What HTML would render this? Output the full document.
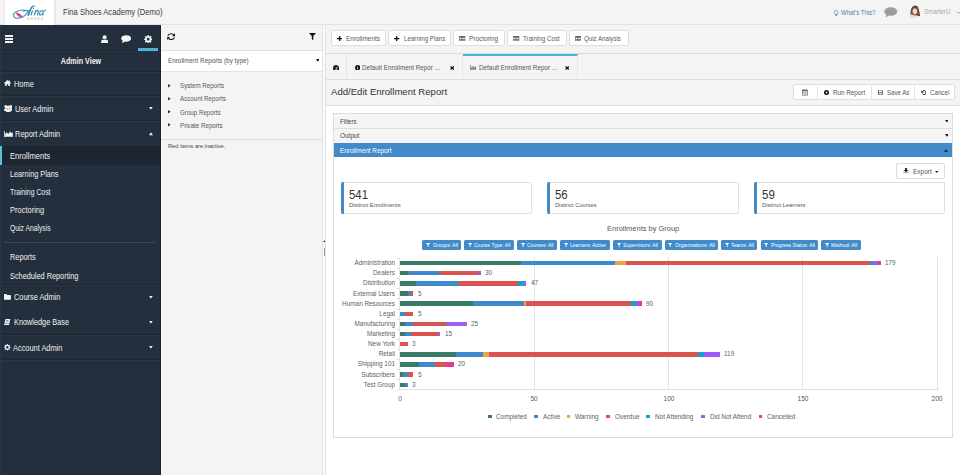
<!DOCTYPE html>
<html><head><meta charset="utf-8">
<style>
*{box-sizing:border-box;margin:0;padding:0}
html,body{width:960px;height:475px;overflow:hidden;background:#f4f4f4;font-family:"Liberation Sans",sans-serif;color:#333}
body{position:relative}
.a{position:absolute;white-space:nowrap}
</style></head><body>
<div class="a" style="left:0px;top:0px;width:960px;height:25px;background:#f4f4f4;"></div>
<div class="a" style="left:0px;top:24px;width:960px;height:1px;background:#e2e2e2;"></div>
<div class="a" style="left:3.5px;top:0px;width:1px;height:25px;background:#e6e6e6;"></div>
<div class="a" style="left:54px;top:0px;width:1.5px;height:25px;background:#e6e6e6;"></div>
<div class="a" style="left:4.5px;top:0px;width:49.5px;height:24.5px;background:#fff;"></div>
<svg class="a" style="left:10px;top:2.5px;" width="40" height="20" viewBox="0 0 950 475"><path d="M460 185 C360 165 210 150 115 230 C45 295 95 375 205 362 C305 350 385 280 432 200" fill="none" stroke="#5aa6cf" stroke-width="30"/><path d="M135 220 C150 290 200 340 285 348 C300 318 275 290 245 268 C210 245 170 225 135 220z" fill="#e3467c"/><path d="M545 75 C495 100 470 210 425 300" fill="none" stroke="#2f7ea6" stroke-width="38"/><path d="M545 75 C575 55 600 75 570 95" fill="none" stroke="#2f7ea6" stroke-width="22"/><path d="M300 190 L470 180" stroke="#3d8ab3" stroke-width="22"/><path d="M535 175 L500 295 M610 175 L575 295 M600 215 C640 160 690 165 665 230 L650 295" fill="none" stroke="#3a8bb5" stroke-width="30"/><circle cx="560" cy="128" r="18" fill="#3a8bb5"/><path d="M790 200 C760 160 700 200 700 260 C700 310 760 290 790 215 L775 295 M790 200 L850 160" fill="none" stroke="#4a98c2" stroke-width="28"/><text x="405" y="405" font-family="Liberation Sans" font-size="78" letter-spacing="26" fill="#a9a9a9">SHOES</text></svg>
<div class="a" style="left:62.5px;top:6px;font-size:8.6px;line-height:12px;color:#3a3a3a;font-weight:400;transform:scaleX(0.8876);transform-origin:left center;">Fina Shoes Academy (Demo)</div>
<svg class="a" style="left:834px;top:9.5px;" width="4.5" height="6" viewBox="0 0 9 12"><path d="M4.5 0.8a3.7 3.7 0 0 1 2.3 6.6v1.6H2.2V7.4A3.7 3.7 0 0 1 4.5 0.8z" fill="none" stroke="#5b86b8" stroke-width="1.4"/><rect x="2.6" y="9.8" width="3.8" height="1.6" fill="#5b86b8"/></svg>
<div class="a" style="left:841px;top:7px;font-size:7.2px;line-height:12px;color:#4f7db4;font-weight:400;transform:scaleX(0.8362);transform-origin:left center;">What's This?</div>
<svg class="a" style="left:884px;top:7px;" width="13.5" height="11" viewBox="0 0 27 22"><ellipse cx="13.5" cy="9" rx="13" ry="8.5" fill="#9d9d9d"/><path d="M5 14 L3 21 L11 16z" fill="#9d9d9d"/></svg>
<svg class="a" style="left:907.5px;top:5px;" width="12.5" height="13" viewBox="0 0 25 26"><path d="M6 24 Q4 14 6.5 7 Q9.5 0.5 14.5 1 Q20 1.5 21.5 8 Q23 15 24.5 22 Q21 23 18 21 L8 21z" fill="#73463a"/><ellipse cx="13.8" cy="12.5" rx="4.6" ry="6.2" fill="#f1d3c2"/><path d="M9 8 Q13 4.5 19 7.5 Q17.5 4 13.5 4 Q10 4.5 9 8z" fill="#73463a"/><path d="M4 26 Q5 19 8 18 Q10 22 13 21 Q17 24 21 26z" fill="#f0dcd2"/></svg>
<div class="a" style="left:924px;top:6px;font-size:7.2px;line-height:12px;color:#a9a9a9;font-weight:400;transform:scaleX(0.8569);transform-origin:left center;">SmarterU</div>
<svg class="a" style="left:955.5px;top:10.5px;" width="5" height="3" viewBox="0 0 10 6"><path d="M1 1l4 4 4-4" fill="none" stroke="#888" stroke-width="1.5"/></svg>
<div class="a" style="left:0px;top:25px;width:160px;height:450px;background:#242f3e;"></div>
<div class="a" style="left:160px;top:25px;width:1px;height:450px;background:#1b222c;"></div>
<div class="a" style="left:0px;top:25px;width:1px;height:450px;background:#2a3442;"></div>
<div class="a" style="left:5px;top:35px;width:8px;height:1.6px;background:#f2f2f2;"></div>
<div class="a" style="left:5px;top:38px;width:8px;height:1.6px;background:#f2f2f2;"></div>
<div class="a" style="left:5px;top:41px;width:8px;height:1.6px;background:#f2f2f2;"></div>
<svg class="a" style="left:101px;top:34.6px;" width="7.2" height="8.4" viewBox="0 0 14 16"><ellipse cx="7" cy="4.4" rx="3.9" ry="4.2" fill="#f4f4f4"/><path d="M0 14 Q0 9.6 3.4 8.4 Q7 10.6 10.6 8.4 Q14 9.6 14 14 Q14 16 12 16 H2 Q0 16 0 14z" fill="#f4f4f4"/></svg>
<svg class="a" style="left:120.8px;top:35px;" width="10.4" height="8.3" viewBox="0 0 20 16"><ellipse cx="10" cy="6.6" rx="9.6" ry="6.3" fill="#f4f4f4"/><path d="M3.5 10.5 L1.6 15.6 L8.5 12.4z" fill="#f4f4f4"/></svg>
<svg class="a" style="left:143.9px;top:34.7px;" width="8.5" height="8.5" viewBox="0 0 16 16"><path fill="#f4f4f4" fill-rule="evenodd" d="M13.59 5.81 L13.89 6.87 L15.89 6.69 L15.89 9.31 L13.89 9.13 L13.59 10.19 L13.50 10.40 L12.97 11.37 L14.51 12.65 L12.65 14.51 L11.37 12.97 L10.40 13.50 L10.19 13.59 L9.13 13.89 L9.31 15.89 L6.69 15.89 L6.87 13.89 L5.81 13.59 L5.60 13.50 L4.63 12.97 L3.35 14.51 L1.49 12.65 L3.03 11.37 L2.50 10.40 L2.41 10.19 L2.11 9.13 L0.11 9.31 L0.11 6.69 L2.11 6.87 L2.41 5.81 L2.50 5.60 L3.03 4.63 L1.49 3.35 L3.35 1.49 L4.63 3.03 L5.60 2.50 L5.81 2.41 L6.87 2.11 L6.69 0.11 L9.31 0.11 L9.13 2.11 L10.19 2.41 L10.40 2.50 L11.37 3.03 L12.65 1.49 L14.51 3.35 L12.97 4.63 L13.50 5.60z M10.6 8 a2.6 2.6 0 1 0 -5.2 0 a2.6 2.6 0 1 0 5.2 0z"/></svg>
<div class="a" style="left:1px;top:49.6px;width:159px;height:1px;background:#1e2733;"></div>
<div class="a" style="left:1px;top:50.6px;width:159px;height:1px;background:#2b3645;"></div>
<div class="a" style="left:138.3px;top:48.4px;width:19.7px;height:2.4px;background:#4cb2d8;"></div>
<div class="a" style="left:-69.2px;width:300px;text-align:center;top:55px;font-size:8.6px;line-height:12px;color:#f2f2f2;font-weight:700;transform:scaleX(0.8314);transform-origin:center center;">Admin View</div>
<div class="a" style="left:1px;top:70.5px;width:159px;height:1px;background:#1e2733;"></div>
<div class="a" style="left:1px;top:71.5px;width:159px;height:1px;background:#2b3645;"></div>
<svg class="a" style="left:3.7px;top:80.4px;" width="7" height="6" viewBox="0 0 13 11"><path d="M6.5 0 L13 5.6 L11.9 6.8 L11 6 V11 H7.9 V7.9 H5.1 V11 H2 V6 L1.1 6.8 L0 5.6z M9.4 0.8 H11.2 V3.6 L9.4 2.1z" fill="#f4f4f4"/></svg>
<div class="a" style="left:13.6px;top:78px;font-size:8.6px;line-height:12px;color:#f2f2f2;font-weight:400;transform:scaleX(0.8630);transform-origin:left center;">Home</div>
<div class="a" style="left:1px;top:95px;width:159px;height:1px;background:#1e2733;"></div>
<div class="a" style="left:1px;top:96px;width:159px;height:1px;background:#2b3645;"></div>
<svg class="a" style="left:3.5px;top:104.9px;" width="8.6" height="7.2" viewBox="0 0 16 13.4"><circle cx="3.4" cy="3" r="2.8" fill="#f4f4f4"/><circle cx="12.6" cy="3" r="2.8" fill="#f4f4f4"/><circle cx="8" cy="4.4" r="3.3" fill="#f4f4f4"/><path d="M0 10.4 Q0 5.6 3.4 5.6 Q5.2 5.6 6 6.8 Q4.4 8.4 4.4 11 H0z M16 10.4 Q16 5.6 12.6 5.6 Q10.8 5.6 10 6.8 Q11.6 8.4 11.6 11 H16z M3.6 13.4 Q3.6 7.6 8 7.6 Q12.4 7.6 12.4 13.4z" fill="#f4f4f4"/></svg>
<div class="a" style="left:14.6px;top:103px;font-size:8.6px;line-height:12px;color:#f2f2f2;font-weight:400;transform:scaleX(0.8639);transform-origin:left center;">User Admin</div>
<svg class="a" style="left:149.4px;top:107px;" width="3.8" height="2.7" viewBox="0 0 8 6"><path d="M0 0h8L4 6z" fill="#f2f2f2"/></svg>
<div class="a" style="left:1px;top:120px;width:159px;height:1px;background:#1e2733;"></div>
<div class="a" style="left:1px;top:121px;width:159px;height:1px;background:#2b3645;"></div>
<svg class="a" style="left:3.6px;top:130.7px;" width="9.2" height="6.1" viewBox="0 0 17 11"><path d="M0 0 H1.5 V9.5 H17 V11 H0z M2.2 9 V5.5 L5 2.2 L8 5.2 L11.2 1 L14 4 L16.2 1.8 V9z" fill="#f4f4f4"/></svg>
<div class="a" style="left:15.3px;top:128px;font-size:8.6px;line-height:12px;color:#f2f2f2;font-weight:400;transform:scaleX(0.8694);transform-origin:left center;">Report Admin</div>
<svg class="a" style="left:149.3px;top:132.4px;" width="4" height="3.3" viewBox="0 0 8 6"><path d="M0 6h8L4 0z" fill="#f2f2f2"/></svg>
<div class="a" style="left:1px;top:146px;width:159px;height:18.8px;background:#1d2530;"></div>
<div class="a" style="left:0px;top:146px;width:2px;height:18.8px;background:#5bc0de;"></div>
<div class="a" style="left:9.6px;top:150px;font-size:8.6px;line-height:12px;color:#f0f0f0;font-weight:400;transform:scaleX(0.8830);transform-origin:left center;">Enrollments</div>
<div class="a" style="left:9.6px;top:168px;font-size:8.6px;line-height:12px;color:#f0f0f0;font-weight:400;transform:scaleX(0.8453);transform-origin:left center;">Learning Plans</div>
<div class="a" style="left:9.6px;top:186px;font-size:8.6px;line-height:12px;color:#f0f0f0;font-weight:400;transform:scaleX(0.7968);transform-origin:left center;">Training Cost</div>
<div class="a" style="left:9.6px;top:204px;font-size:8.6px;line-height:12px;color:#f0f0f0;font-weight:400;transform:scaleX(0.8725);transform-origin:left center;">Proctoring</div>
<div class="a" style="left:9.6px;top:222px;font-size:8.6px;line-height:12px;color:#f0f0f0;font-weight:400;transform:scaleX(0.7864);transform-origin:left center;">Quiz Analysis</div>
<div class="a" style="left:4px;top:241.6px;width:151px;height:1px;background:#34485e;"></div>
<div class="a" style="left:9.7px;top:251px;font-size:8.6px;line-height:12px;color:#f0f0f0;font-weight:400;transform:scaleX(0.8568);transform-origin:left center;">Reports</div>
<div class="a" style="left:9.7px;top:270px;font-size:8.6px;line-height:12px;color:#f0f0f0;font-weight:400;transform:scaleX(0.8528);transform-origin:left center;">Scheduled Reporting</div>
<div class="a" style="left:1px;top:284px;width:159px;height:1px;background:#1e2733;"></div>
<div class="a" style="left:1px;top:285px;width:159px;height:1px;background:#2b3645;"></div>
<svg class="a" style="left:4.2px;top:294px;" width="6.9" height="5.7" viewBox="0 0 14 11.5"><path d="M0 1 Q0 0 1 0 H5 L6.5 1.8 H13 Q14 1.8 14 2.8 V10.5 Q14 11.5 13 11.5 H1 Q0 11.5 0 10.5z" fill="#f2f2f2"/></svg>
<div class="a" style="left:13.9px;top:291px;font-size:8.6px;line-height:12px;color:#f2f2f2;font-weight:400;transform:scaleX(0.8590);transform-origin:left center;">Course Admin</div>
<svg class="a" style="left:149.4px;top:296px;" width="3.8" height="2.7" viewBox="0 0 8 6"><path d="M0 0h8L4 6z" fill="#f2f2f2"/></svg>
<div class="a" style="left:1px;top:309.4px;width:159px;height:1px;background:#1e2733;"></div>
<div class="a" style="left:1px;top:310.4px;width:159px;height:1px;background:#2b3645;"></div>
<svg class="a" style="left:4.2px;top:319px;" width="6.8" height="6.2" viewBox="0 0 14 12.5"><path d="M3 0 H13 L11 9 H1z" fill="#f2f2f2"/><path d="M0.5 9.5 H11 L10.3 12.5 H0z" fill="#f2f2f2"/><path d="M4.5 3h5M4 5.5h5" stroke="#242f3e" stroke-width="0.9"/></svg>
<div class="a" style="left:13.9px;top:316px;font-size:8.6px;line-height:12px;color:#f2f2f2;font-weight:400;transform:scaleX(0.8521);transform-origin:left center;">Knowledge Base</div>
<svg class="a" style="left:149.4px;top:321px;" width="3.8" height="2.7" viewBox="0 0 8 6"><path d="M0 0h8L4 6z" fill="#f2f2f2"/></svg>
<div class="a" style="left:1px;top:334.3px;width:159px;height:1px;background:#1e2733;"></div>
<div class="a" style="left:1px;top:335.3px;width:159px;height:1px;background:#2b3645;"></div>
<svg class="a" style="left:4.2px;top:344.4px;" width="6.6" height="6.6" viewBox="0 0 16 16"><path fill="#f2f2f2" fill-rule="evenodd" d="M13.59 5.81 L13.89 6.87 L15.89 6.69 L15.89 9.31 L13.89 9.13 L13.59 10.19 L13.50 10.40 L12.97 11.37 L14.51 12.65 L12.65 14.51 L11.37 12.97 L10.40 13.50 L10.19 13.59 L9.13 13.89 L9.31 15.89 L6.69 15.89 L6.87 13.89 L5.81 13.59 L5.60 13.50 L4.63 12.97 L3.35 14.51 L1.49 12.65 L3.03 11.37 L2.50 10.40 L2.41 10.19 L2.11 9.13 L0.11 9.31 L0.11 6.69 L2.11 6.87 L2.41 5.81 L2.50 5.60 L3.03 4.63 L1.49 3.35 L3.35 1.49 L4.63 3.03 L5.60 2.50 L5.81 2.41 L6.87 2.11 L6.69 0.11 L9.31 0.11 L9.13 2.11 L10.19 2.41 L10.40 2.50 L11.37 3.03 L12.65 1.49 L14.51 3.35 L12.97 4.63 L13.50 5.60z M11 8 a3 3 0 1 0 -6 0 a3 3 0 1 0 6 0z"/></svg>
<div class="a" style="left:13.2px;top:342px;font-size:8.6px;line-height:12px;color:#f2f2f2;font-weight:400;transform:scaleX(0.8611);transform-origin:left center;">Account Admin</div>
<svg class="a" style="left:149.4px;top:346px;" width="3.8" height="2.7" viewBox="0 0 8 6"><path d="M0 0h8L4 6z" fill="#f2f2f2"/></svg>
<div class="a" style="left:1px;top:359px;width:159px;height:1px;background:#1e2733;"></div>
<div class="a" style="left:1px;top:360px;width:159px;height:1px;background:#2b3645;"></div>
<div class="a" style="left:161px;top:25px;width:161px;height:450px;background:#f4f4f4;"></div>
<svg class="a" style="left:166.6px;top:33px;" width="8.2" height="7.3" viewBox="0 0 16 14"><path d="M1.4 5.6 C2.6 2.4 5 1.3 8 1.3 C10.6 1.3 12.3 2.3 13.3 3.8" fill="none" stroke="#111" stroke-width="2.1"/><path d="M15.6 0.6 V6.2 H10z" fill="#111"/><path d="M14.6 8.4 C13.4 11.6 11 12.7 8 12.7 C5.4 12.7 3.7 11.7 2.7 10.2" fill="none" stroke="#111" stroke-width="2.1"/><path d="M0.4 13.4 V7.8 H6z" fill="#111"/></svg>
<svg class="a" style="left:308.7px;top:32.8px;" width="7.1" height="7.4" viewBox="0 0 14 14.5"><path d="M0 0 H14 L8.5 6 V14.5 L5.5 12 V6z" fill="#111"/></svg>
<div class="a" style="left:161px;top:49.5px;width:161px;height:1px;background:#e1e1e1;"></div>
<div class="a" style="left:161px;top:50.5px;width:161px;height:20.5px;background:#fff;"></div>
<div class="a" style="left:161px;top:71px;width:161px;height:1px;background:#e4e4e4;"></div>
<div class="a" style="left:167.6px;top:55px;font-size:7.2px;line-height:12px;color:#555;font-weight:400;transform:scaleX(0.8817);transform-origin:left center;">Enrollment Reports (by type)</div>
<svg class="a" style="left:315.6px;top:59px;" width="3.6" height="2.9" viewBox="0 0 8 6"><path d="M0 0h8L4 6z" fill="#111"/></svg>
<svg class="a" style="left:168.3px;top:84.0px;" width="2.7" height="3.6" viewBox="0 0 6 8"><path d="M0 0v8l6-4z" fill="#333"/></svg>
<div class="a" style="left:179.6px;top:80px;font-size:7.2px;line-height:12px;color:#585858;font-weight:400;transform:scaleX(0.8611);transform-origin:left center;">System Reports</div>
<svg class="a" style="left:168.3px;top:97.13px;" width="2.7" height="3.6" viewBox="0 0 6 8"><path d="M0 0v8l6-4z" fill="#333"/></svg>
<div class="a" style="left:179.6px;top:93px;font-size:7.2px;line-height:12px;color:#585858;font-weight:400;transform:scaleX(0.8611);transform-origin:left center;">Account Reports</div>
<svg class="a" style="left:168.3px;top:110.26px;" width="2.7" height="3.6" viewBox="0 0 6 8"><path d="M0 0v8l6-4z" fill="#333"/></svg>
<div class="a" style="left:179.6px;top:107px;font-size:7.2px;line-height:12px;color:#585858;font-weight:400;transform:scaleX(0.8611);transform-origin:left center;">Group Reports</div>
<svg class="a" style="left:168.3px;top:123.39px;" width="2.7" height="3.6" viewBox="0 0 6 8"><path d="M0 0v8l6-4z" fill="#333"/></svg>
<div class="a" style="left:179.6px;top:120px;font-size:7.2px;line-height:12px;color:#585858;font-weight:400;transform:scaleX(0.8611);transform-origin:left center;">Private Reports</div>
<div class="a" style="left:161px;top:139px;width:161px;height:1px;background:#dedede;"></div>
<div class="a" style="left:168px;top:140px;font-size:6.0px;line-height:12px;color:#444;font-weight:400;transform:scaleX(0.9373);transform-origin:left center;">Red items are inactive.</div>
<div class="a" style="left:322px;top:25px;width:1px;height:450px;background:#e3e3e3;"></div>
<div class="a" style="left:323px;top:25px;width:2.5px;height:450px;background:#fafafa;"></div>
<div class="a" style="left:325px;top:25px;width:1px;height:450px;background:#e3e3e3;"></div>
<svg class="a" style="left:323px;top:240.4px;" width="2.4" height="2.8" viewBox="0 0 4 5"><path d="M4 0v5L0 2.5z" fill="#333"/></svg>
<div class="a" style="left:323.8px;top:248px;width:1.2px;height:8px;background:#9a9a9a;"></div>
<div class="a" style="left:326px;top:25px;width:634px;height:80px;background:#f4f4f4;"></div>
<div class="a" style="left:330.6px;top:30px;width:55.6px;height:16.4px;background:#fff;border:1px solid #dedede;border-radius:2px;"></div>
<svg class="a" style="left:336.8px;top:35.5px;" width="5.4" height="5.4" viewBox="0 0 10 10"><path d="M3.8 0h2.4v3.8H10v2.4H6.2V10H3.8V6.2H0V3.8h3.8z" fill="#111"/></svg>
<div class="a" style="left:346px;top:33px;font-size:7.2px;line-height:12px;color:#5a5a5a;font-weight:400;transform:scaleX(0.8969);transform-origin:left center;">Enrollments</div>
<div class="a" style="left:388.20000000000005px;top:30px;width:62.99999999999998px;height:16.4px;background:#fff;border:1px solid #dedede;border-radius:2px;"></div>
<svg class="a" style="left:394.40000000000003px;top:35.5px;" width="5.4" height="5.4" viewBox="0 0 10 10"><path d="M3.8 0h2.4v3.8H10v2.4H6.2V10H3.8V6.2H0V3.8h3.8z" fill="#111"/></svg>
<div class="a" style="left:403.6px;top:33px;font-size:7.2px;line-height:12px;color:#5a5a5a;font-weight:400;transform:scaleX(0.8618);transform-origin:left center;">Learning Plans</div>
<div class="a" style="left:453.35px;top:30px;width:51.85px;height:16.4px;background:#fff;border:1px solid #dedede;border-radius:2px;"></div>
<svg class="a" style="left:459.35px;top:35.7px;" width="6.4" height="5.2" viewBox="0 0 12 10"><path fill="#666" fill-rule="evenodd" d="M0 0h12v10H0z M1.2 3.2h2.8v2.6H1.2z M5.2 3.2h1.6v2.6H5.2z M8 3.2h2.8v2.6H8z M1.2 7h2.8v1.8H1.2z M5.2 7h1.6v1.8H5.2z M8 7h2.8v1.8H8z"/></svg>
<div class="a" style="left:468.75px;top:33px;font-size:7.2px;line-height:12px;color:#5a5a5a;font-weight:400;transform:scaleX(0.8898);transform-origin:left center;">Proctoring</div>
<div class="a" style="left:507.20000000000005px;top:30px;width:59.399999999999956px;height:16.4px;background:#fff;border:1px solid #dedede;border-radius:2px;"></div>
<svg class="a" style="left:513.2px;top:35.7px;" width="6.4" height="5.2" viewBox="0 0 12 10"><path fill="#666" fill-rule="evenodd" d="M0 0h12v10H0z M1.2 3.2h2.8v2.6H1.2z M5.2 3.2h1.6v2.6H5.2z M8 3.2h2.8v2.6H8z M1.2 7h2.8v1.8H1.2z M5.2 7h1.6v1.8H5.2z M8 7h2.8v1.8H8z"/></svg>
<div class="a" style="left:522.6px;top:33px;font-size:7.2px;line-height:12px;color:#5a5a5a;font-weight:400;transform:scaleX(0.8648);transform-origin:left center;">Training Cost</div>
<div class="a" style="left:569.0px;top:30px;width:59.80000000000005px;height:16.4px;background:#fff;border:1px solid #dedede;border-radius:2px;"></div>
<svg class="a" style="left:575.0px;top:35.7px;" width="6.4" height="5.2" viewBox="0 0 12 10"><path fill="#666" fill-rule="evenodd" d="M0 0h12v10H0z M1.2 3.2h2.8v2.6H1.2z M5.2 3.2h1.6v2.6H5.2z M8 3.2h2.8v2.6H8z M1.2 7h2.8v1.8H1.2z M5.2 7h1.6v1.8H5.2z M8 7h2.8v1.8H8z"/></svg>
<div class="a" style="left:584.4px;top:33px;font-size:7.2px;line-height:12px;color:#5a5a5a;font-weight:400;transform:scaleX(0.8560);transform-origin:left center;">Quiz Analysis</div>
<div class="a" style="left:326px;top:53px;width:634px;height:1px;background:#dcdcdc;"></div>
<div class="a" style="left:346px;top:55px;width:0.8px;height:23px;background:#e6e6e6;"></div>
<svg class="a" style="left:333px;top:64.6px;" width="6.2" height="5.4" viewBox="0 0 12 10.5"><path fill="#222" d="M6 0A6 6 0 0 0 0 6V10.5H12V6A6 6 0 0 0 6 0z"/><path d="M6.2 8.5 L9 3" stroke="#f4f4f4" stroke-width="1.3"/><circle cx="6" cy="8.3" r="1.3" fill="#f4f4f4"/></svg>
<svg class="a" style="left:354.75px;top:65px;" width="5.3" height="5.3" viewBox="0 0 10 10"><circle cx="5" cy="5" r="5" fill="#111"/><rect x="4.2" y="4.2" width="1.6" height="4" fill="#f4f4f4"/><circle cx="5" cy="2.6" r="0.9" fill="#f4f4f4"/></svg>
<div class="a" style="left:362.2px;top:62px;font-size:7.2px;line-height:12px;color:#555;font-weight:400;transform:scaleX(0.8780);transform-origin:left center;">Default Enrollment Repor ...</div>
<svg class="a" style="left:449.7px;top:65.8px;" width="4.5" height="4" viewBox="0 0 9 8"><path d="M1.2 1l6.6 6M7.8 1l-6.6 6" stroke="#111" stroke-width="2.6"/></svg>
<div class="a" style="left:462.2px;top:55px;width:0.8px;height:23px;background:#e6e6e6;"></div>
<div class="a" style="left:462.5px;top:53.8px;width:115px;height:2.2px;background:#4cb2d8;"></div>
<div class="a" style="left:577px;top:55px;width:0.8px;height:23px;background:#e6e6e6;"></div>
<svg class="a" style="left:470px;top:65px;" width="6.3" height="5" viewBox="0 0 12 10"><path fill="#555" d="M0 0h1.2v8.8H12V10H0z M2.5 8V4.5h1.8V8z M5 8V2h1.8v6z M7.5 8V5h1.8v3z M10 8V3h1.5v5z"/></svg>
<div class="a" style="left:479.2px;top:62px;font-size:7.2px;line-height:12px;color:#555;font-weight:400;transform:scaleX(0.8813);transform-origin:left center;">Default Enrollment Repor ...</div>
<svg class="a" style="left:565px;top:65.8px;" width="4.4" height="4" viewBox="0 0 9 8"><path d="M1.2 1l6.6 6M7.8 1l-6.6 6" stroke="#111" stroke-width="2.6"/></svg>
<div class="a" style="left:326px;top:78.5px;width:634px;height:1px;background:#dcdcdc;"></div>
<div class="a" style="left:330.6px;top:86px;font-size:9.9px;line-height:12px;color:#333;font-weight:400;transform:scaleX(0.9703);transform-origin:left center;">Add/Edit Enrollment Report</div>
<div class="a" style="left:792.5px;top:84.3px;width:162.8px;height:16px;background:#fff;border:1px solid #dedede;border-radius:2px;"></div>
<div class="a" style="left:817.2px;top:85.5px;width:0.8px;height:14px;background:#e2e2e2;"></div>
<div class="a" style="left:871.1px;top:85.5px;width:0.8px;height:14px;background:#e2e2e2;"></div>
<div class="a" style="left:914.3px;top:85.5px;width:0.8px;height:14px;background:#e2e2e2;"></div>
<svg class="a" style="left:802.2px;top:89.3px;" width="5.8" height="6.6" viewBox="0 0 11 12.5"><path fill="#666" fill-rule="evenodd" d="M0 1.5h11v11H0z M1.2 4.5h8.6v6.8H1.2z"/><rect x="2.5" y="0" width="1.3" height="2.5" fill="#666"/><rect x="7.2" y="0" width="1.3" height="2.5" fill="#666"/><path d="M1.2 7.2h8.6M1.2 9.3h8.6M4 4.5v6.8M7 4.5v6.8" stroke="#666" stroke-width="0.7"/></svg>
<svg class="a" style="left:823.7px;top:90px;" width="5" height="5" viewBox="0 0 10 10"><circle cx="5" cy="5" r="5" fill="#111"/><path d="M3.8 2.6v4.8L7.6 5z" fill="#fff"/></svg>
<div class="a" style="left:832.9px;top:87px;font-size:7.2px;line-height:12px;color:#555;font-weight:400;transform:scaleX(0.8750);transform-origin:left center;">Run Report</div>
<svg class="a" style="left:877.7px;top:90px;" width="5.3" height="5.1" viewBox="0 0 10.5 10"><path fill="#777" fill-rule="evenodd" d="M0 0h8.5l2 2v8H0z M2 1v2.8h5.5V1z"/><rect x="2.2" y="5.6" width="6" height="3" fill="#ddd"/></svg>
<div class="a" style="left:886.9px;top:87px;font-size:7.2px;line-height:12px;color:#555;font-weight:400;transform:scaleX(0.8472);transform-origin:left center;">Save As</div>
<svg class="a" style="left:920.6px;top:89.8px;" width="5.6" height="5.4" viewBox="0 0 11 10.5"><path d="M3.3 2.4 A3.9 3.9 0 1 1 2.9 7.6" fill="none" stroke="#111" stroke-width="1.9"/><path d="M0.6 0.6 L0.6 5.4 L5.4 5.4z" fill="#111"/></svg>
<div class="a" style="left:930.2px;top:87px;font-size:7.2px;line-height:12px;color:#555;font-weight:400;transform:scaleX(0.8611);transform-origin:left center;">Cancel</div>
<div class="a" style="left:326px;top:105px;width:634px;height:370px;background:#fff;"></div>
<div class="a" style="left:326px;top:104.5px;width:634px;height:1px;background:#dcdcdc;"></div>
<div class="a" style="left:333px;top:113.3px;width:620px;height:324.4px;background:transparent;border:1px solid #dcdcdc;"></div>
<div class="a" style="left:334px;top:114.3px;width:618px;height:13.9px;background:#f5f5f5;"></div>
<div class="a" style="left:334px;top:128.2px;width:618px;height:1px;background:#dedede;"></div>
<div class="a" style="left:340px;top:116px;font-size:7.2px;line-height:12px;color:#444;font-weight:400;transform:scaleX(0.8468);transform-origin:left center;">Filters</div>
<svg class="a" style="left:944.6px;top:119.6px;" width="3.8" height="2.9" viewBox="0 0 8 6"><path d="M0 0h8L4 6z" fill="#222"/></svg>
<div class="a" style="left:334px;top:129.2px;width:618px;height:14px;background:#f5f5f5;"></div>
<div class="a" style="left:334px;top:143.2px;width:618px;height:0.3px;background:#dedede;"></div>
<div class="a" style="left:340px;top:130px;font-size:7.2px;line-height:12px;color:#444;font-weight:400;transform:scaleX(0.8974);transform-origin:left center;">Output</div>
<svg class="a" style="left:944.6px;top:134.1px;" width="3.8" height="2.9" viewBox="0 0 8 6"><path d="M0 0h8L4 6z" fill="#222"/></svg>
<div class="a" style="left:334px;top:143.4px;width:618px;height:14.1px;background:#428bca;"></div>
<div class="a" style="left:340px;top:145px;font-size:7.2px;line-height:12px;color:#fff;font-weight:400;transform:scaleX(0.8892);transform-origin:left center;">Enrollment Report</div>
<svg class="a" style="left:944.4px;top:149.2px;" width="4" height="3.2" viewBox="0 0 8 6"><path d="M0 6h8L4 0z" fill="#1a2633"/></svg>
<div class="a" style="left:896.2px;top:163.3px;width:48.6px;height:16px;background:#fff;border:1px solid #dcdcdc;border-radius:2px;"></div>
<svg class="a" style="left:903px;top:167.7px;" width="6" height="5.5" viewBox="0 0 12 11"><path d="M4 0h4v4h3L6 8.5 1 4h3z" fill="#222"/><rect x="0" y="9.3" width="12" height="1.7" fill="#222"/></svg>
<div class="a" style="left:912.6px;top:166px;font-size:7.2px;line-height:12px;color:#555;font-weight:400;transform:scaleX(0.9033);transform-origin:left center;">Export</div>
<svg class="a" style="left:934.7px;top:170.5px;" width="3.5" height="2" viewBox="0 0 8 4.5"><path d="M0 0h8L4 4.5z" fill="#222"/></svg>
<div class="a" style="left:341px;top:182.4px;width:191.0px;height:31.8px;background:#fff;border:1px solid #e0e0e0;border-left:none;border-radius:0 2px 2px 0;"></div>
<div class="a" style="left:341px;top:182.4px;width:2.7px;height:31.6px;background:#428bca;border-radius:2px 0 0 2px;"></div>
<div class="a" style="left:349px;top:189px;font-size:12.5px;line-height:12px;color:#333;font-weight:400;transform:scaleX(0.9109);transform-origin:left center;">541</div>
<div class="a" style="left:349px;top:199px;font-size:6.0px;line-height:12px;color:#555;font-weight:400;transform:scaleX(0.9733);transform-origin:left center;">Distinct Enrollments</div>
<div class="a" style="left:547.4px;top:182.4px;width:191.6px;height:31.8px;background:#fff;border:1px solid #e0e0e0;border-left:none;border-radius:0 2px 2px 0;"></div>
<div class="a" style="left:547.4px;top:182.4px;width:2.7px;height:31.6px;background:#428bca;border-radius:2px 0 0 2px;"></div>
<div class="a" style="left:555.4px;top:189px;font-size:12.5px;line-height:12px;color:#333;font-weight:400;transform:scaleX(0.9061);transform-origin:left center;">56</div>
<div class="a" style="left:555.4px;top:199px;font-size:6.0px;line-height:12px;color:#555;font-weight:400;transform:scaleX(0.9500);transform-origin:left center;">Distinct Courses</div>
<div class="a" style="left:754px;top:182.4px;width:191.1px;height:31.8px;background:#fff;border:1px solid #e0e0e0;border-left:none;border-radius:0 2px 2px 0;"></div>
<div class="a" style="left:754px;top:182.4px;width:2.7px;height:31.6px;background:#428bca;border-radius:2px 0 0 2px;"></div>
<div class="a" style="left:762px;top:189px;font-size:12.5px;line-height:12px;color:#333;font-weight:400;transform:scaleX(0.9204);transform-origin:left center;">59</div>
<div class="a" style="left:762px;top:199px;font-size:6.0px;line-height:12px;color:#555;font-weight:400;transform:scaleX(0.9663);transform-origin:left center;">Distinct Learners</div>
<div class="a" style="left:606.6px;top:223px;font-size:7.2px;line-height:12px;color:#555;font-weight:400;transform:scaleX(1.0398);transform-origin:left center;">Enrollments by Group</div>
<div class="a" style="left:533.8px;top:257.3px;width:1px;height:132px;background:#e2e2e2;"></div>
<div class="a" style="left:668.1px;top:257.3px;width:1px;height:132px;background:#e2e2e2;"></div>
<div class="a" style="left:802.4px;top:257.3px;width:1px;height:132px;background:#e2e2e2;"></div>
<div class="a" style="left:936.7px;top:257.3px;width:1px;height:132px;background:#e2e2e2;"></div>
<div class="a" style="left:399px;top:257.3px;width:0.8px;height:132px;background:#e6e6e6;"></div>
<div class="a" style="left:399px;top:389px;width:539px;height:1px;background:#e0e0e0;"></div>
<div class="a" style="left:397px;top:257.8px;width:2px;height:0.8px;background:#d8d8d8;"></div>
<div class="a" style="left:397px;top:267.94px;width:2px;height:0.8px;background:#d8d8d8;"></div>
<div class="a" style="left:397px;top:278.08000000000004px;width:2px;height:0.8px;background:#d8d8d8;"></div>
<div class="a" style="left:397px;top:288.22px;width:2px;height:0.8px;background:#d8d8d8;"></div>
<div class="a" style="left:397px;top:298.36px;width:2px;height:0.8px;background:#d8d8d8;"></div>
<div class="a" style="left:397px;top:308.5px;width:2px;height:0.8px;background:#d8d8d8;"></div>
<div class="a" style="left:397px;top:318.64px;width:2px;height:0.8px;background:#d8d8d8;"></div>
<div class="a" style="left:397px;top:328.78000000000003px;width:2px;height:0.8px;background:#d8d8d8;"></div>
<div class="a" style="left:397px;top:338.92px;width:2px;height:0.8px;background:#d8d8d8;"></div>
<div class="a" style="left:397px;top:349.06px;width:2px;height:0.8px;background:#d8d8d8;"></div>
<div class="a" style="left:397px;top:359.20000000000005px;width:2px;height:0.8px;background:#d8d8d8;"></div>
<div class="a" style="left:397px;top:369.34000000000003px;width:2px;height:0.8px;background:#d8d8d8;"></div>
<div class="a" style="left:397px;top:379.48px;width:2px;height:0.8px;background:#d8d8d8;"></div>
<div class="a" style="left:397px;top:389.62px;width:2px;height:0.8px;background:#d8d8d8;"></div>
<div class="a" style="left:94.69999999999999px;width:300px;text-align:right;top:257px;font-size:7.2px;line-height:12px;color:#606060;font-weight:400;transform:scaleX(0.8889);transform-origin:right center;">Administration</div>
<div class="a" style="left:400.0px;top:260.9px;width:120.92px;height:4.4px;background:#3a7b67;"></div>
<div class="a" style="left:520.87px;top:260.9px;width:94.06px;height:4.4px;background:#3d89cc;"></div>
<div class="a" style="left:614.88px;top:260.9px;width:10.790000000000001px;height:4.4px;background:#eda444;"></div>
<div class="a" style="left:625.62px;top:260.9px;width:244.48000000000002px;height:4.4px;background:#d9534f;"></div>
<div class="a" style="left:870.05px;top:260.9px;width:2.7399999999999998px;height:4.4px;background:#18a3cf;"></div>
<div class="a" style="left:872.74px;top:260.9px;width:5.42px;height:4.4px;background:#9d5cf3;"></div>
<div class="a" style="left:878.11px;top:260.9px;width:2.7399999999999998px;height:4.4px;background:#e23c8d;"></div>
<div class="a" style="left:885.09px;top:257px;font-size:7.2px;line-height:12px;color:#606060;font-weight:400;transform:scaleX(0.8889);transform-origin:left center;">179</div>
<div class="a" style="left:94.69999999999999px;width:300px;text-align:right;top:267px;font-size:7.2px;line-height:12px;color:#606060;font-weight:400;transform:scaleX(0.8889);transform-origin:right center;">Dealers</div>
<div class="a" style="left:400.0px;top:271.04px;width:8.110000000000001px;height:4.4px;background:#3a7b67;"></div>
<div class="a" style="left:408.06px;top:271.04px;width:32.279999999999994px;height:4.4px;background:#3d89cc;"></div>
<div class="a" style="left:440.29px;top:271.04px;width:37.65px;height:4.4px;background:#d9534f;"></div>
<div class="a" style="left:477.89px;top:271.04px;width:2.7399999999999998px;height:4.4px;background:#9d5cf3;"></div>
<div class="a" style="left:484.88px;top:267px;font-size:7.2px;line-height:12px;color:#606060;font-weight:400;transform:scaleX(0.8889);transform-origin:left center;">30</div>
<div class="a" style="left:94.69999999999999px;width:300px;text-align:right;top:277px;font-size:7.2px;line-height:12px;color:#606060;font-weight:400;transform:scaleX(0.8889);transform-origin:right center;">Distribution</div>
<div class="a" style="left:400.0px;top:281.18px;width:16.17px;height:4.4px;background:#3a7b67;"></div>
<div class="a" style="left:416.12px;top:281.18px;width:43.029999999999994px;height:4.4px;background:#3d89cc;"></div>
<div class="a" style="left:459.09px;top:281.18px;width:59.14px;height:4.4px;background:#d9534f;"></div>
<div class="a" style="left:518.18px;top:281.18px;width:5.42px;height:4.4px;background:#18a3cf;"></div>
<div class="a" style="left:523.56px;top:281.18px;width:2.7399999999999998px;height:4.4px;background:#9d5cf3;"></div>
<div class="a" style="left:530.54px;top:277px;font-size:7.2px;line-height:12px;color:#606060;font-weight:400;transform:scaleX(0.8889);transform-origin:left center;">47</div>
<div class="a" style="left:94.69999999999999px;width:300px;text-align:right;top:288px;font-size:7.2px;line-height:12px;color:#606060;font-weight:400;transform:scaleX(0.8889);transform-origin:right center;">External Users</div>
<div class="a" style="left:400.0px;top:291.32px;width:8.110000000000001px;height:4.4px;background:#3a7b67;"></div>
<div class="a" style="left:408.06px;top:291.32px;width:2.7399999999999998px;height:4.4px;background:#3d89cc;"></div>
<div class="a" style="left:410.74px;top:291.32px;width:2.7399999999999998px;height:4.4px;background:#d9534f;"></div>
<div class="a" style="left:417.73px;top:288px;font-size:7.2px;line-height:12px;color:#606060;font-weight:400;transform:scaleX(0.8889);transform-origin:left center;">5</div>
<div class="a" style="left:94.69999999999999px;width:300px;text-align:right;top:298px;font-size:7.2px;line-height:12px;color:#606060;font-weight:400;transform:scaleX(0.8889);transform-origin:right center;">Human Resources</div>
<div class="a" style="left:400.0px;top:301.46px;width:72.57px;height:4.4px;background:#3a7b67;"></div>
<div class="a" style="left:472.52px;top:301.46px;width:51.08px;height:4.4px;background:#3d89cc;"></div>
<div class="a" style="left:523.56px;top:301.46px;width:2.7399999999999998px;height:4.4px;background:#eda444;"></div>
<div class="a" style="left:526.24px;top:301.46px;width:104.8px;height:4.4px;background:#d9534f;"></div>
<div class="a" style="left:631.0px;top:301.46px;width:5.42px;height:4.4px;background:#18a3cf;"></div>
<div class="a" style="left:636.37px;top:301.46px;width:2.7399999999999998px;height:4.4px;background:#9d5cf3;"></div>
<div class="a" style="left:639.05px;top:301.46px;width:2.7399999999999998px;height:4.4px;background:#e23c8d;"></div>
<div class="a" style="left:646.04px;top:298px;font-size:7.2px;line-height:12px;color:#606060;font-weight:400;transform:scaleX(0.8889);transform-origin:left center;">90</div>
<div class="a" style="left:94.69999999999999px;width:300px;text-align:right;top:308px;font-size:7.2px;line-height:12px;color:#606060;font-weight:400;transform:scaleX(0.8889);transform-origin:right center;">Legal</div>
<div class="a" style="left:400.0px;top:311.6px;width:5.42px;height:4.4px;background:#3d89cc;"></div>
<div class="a" style="left:405.37px;top:311.6px;width:8.110000000000001px;height:4.4px;background:#d9534f;"></div>
<div class="a" style="left:417.73px;top:308px;font-size:7.2px;line-height:12px;color:#606060;font-weight:400;transform:scaleX(0.8889);transform-origin:left center;">5</div>
<div class="a" style="left:94.69999999999999px;width:300px;text-align:right;top:318px;font-size:7.2px;line-height:12px;color:#606060;font-weight:400;transform:scaleX(0.8889);transform-origin:right center;">Manufacturing</div>
<div class="a" style="left:400.0px;top:321.74px;width:5.42px;height:4.4px;background:#3a7b67;"></div>
<div class="a" style="left:405.37px;top:321.74px;width:8.110000000000001px;height:4.4px;background:#3d89cc;"></div>
<div class="a" style="left:413.43px;top:321.74px;width:32.279999999999994px;height:4.4px;background:#d9534f;"></div>
<div class="a" style="left:445.66px;top:321.74px;width:21.54px;height:4.4px;background:#9d5cf3;"></div>
<div class="a" style="left:471.45px;top:318px;font-size:7.2px;line-height:12px;color:#606060;font-weight:400;transform:scaleX(0.8889);transform-origin:left center;">25</div>
<div class="a" style="left:94.69999999999999px;width:300px;text-align:right;top:328px;font-size:7.2px;line-height:12px;color:#606060;font-weight:400;transform:scaleX(0.8889);transform-origin:right center;">Marketing</div>
<div class="a" style="left:400.0px;top:331.88px;width:5.42px;height:4.4px;background:#3a7b67;"></div>
<div class="a" style="left:405.37px;top:331.88px;width:5.42px;height:4.4px;background:#3d89cc;"></div>
<div class="a" style="left:410.74px;top:331.88px;width:26.91px;height:4.4px;background:#d9534f;"></div>
<div class="a" style="left:437.6px;top:331.88px;width:2.7399999999999998px;height:4.4px;background:#9d5cf3;"></div>
<div class="a" style="left:444.59px;top:328px;font-size:7.2px;line-height:12px;color:#606060;font-weight:400;transform:scaleX(0.8889);transform-origin:left center;">15</div>
<div class="a" style="left:94.69999999999999px;width:300px;text-align:right;top:338px;font-size:7.2px;line-height:12px;color:#606060;font-weight:400;transform:scaleX(0.8889);transform-origin:right center;">New York</div>
<div class="a" style="left:400.0px;top:342.02px;width:8.110000000000001px;height:4.4px;background:#d9534f;"></div>
<div class="a" style="left:412.36px;top:338px;font-size:7.2px;line-height:12px;color:#606060;font-weight:400;transform:scaleX(0.8889);transform-origin:left center;">3</div>
<div class="a" style="left:94.69999999999999px;width:300px;text-align:right;top:348px;font-size:7.2px;line-height:12px;color:#606060;font-weight:400;transform:scaleX(0.8889);transform-origin:right center;">Retail</div>
<div class="a" style="left:400.0px;top:352.16px;width:56.459999999999994px;height:4.4px;background:#3a7b67;"></div>
<div class="a" style="left:456.41px;top:352.16px;width:26.91px;height:4.4px;background:#3d89cc;"></div>
<div class="a" style="left:483.27px;top:352.16px;width:5.42px;height:4.4px;background:#eda444;"></div>
<div class="a" style="left:488.64px;top:352.16px;width:209.56px;height:4.4px;background:#d9534f;"></div>
<div class="a" style="left:698.15px;top:352.16px;width:5.42px;height:4.4px;background:#18a3cf;"></div>
<div class="a" style="left:703.52px;top:352.16px;width:16.17px;height:4.4px;background:#9d5cf3;"></div>
<div class="a" style="left:723.93px;top:348px;font-size:7.2px;line-height:12px;color:#606060;font-weight:400;transform:scaleX(0.8889);transform-origin:left center;">119</div>
<div class="a" style="left:94.69999999999999px;width:300px;text-align:right;top:358px;font-size:7.2px;line-height:12px;color:#606060;font-weight:400;transform:scaleX(0.8889);transform-origin:right center;">Shipping 101</div>
<div class="a" style="left:400.0px;top:362.3px;width:18.85px;height:4.4px;background:#3a7b67;"></div>
<div class="a" style="left:418.8px;top:362.3px;width:16.17px;height:4.4px;background:#3d89cc;"></div>
<div class="a" style="left:434.92px;top:362.3px;width:10.790000000000001px;height:4.4px;background:#d9534f;"></div>
<div class="a" style="left:445.66px;top:362.3px;width:8.110000000000001px;height:4.4px;background:#e23c8d;"></div>
<div class="a" style="left:458.02px;top:358px;font-size:7.2px;line-height:12px;color:#606060;font-weight:400;transform:scaleX(0.8889);transform-origin:left center;">20</div>
<div class="a" style="left:94.69999999999999px;width:300px;text-align:right;top:369px;font-size:7.2px;line-height:12px;color:#606060;font-weight:400;transform:scaleX(0.8889);transform-origin:right center;">Subscribers</div>
<div class="a" style="left:400.0px;top:372.44px;width:2.7399999999999998px;height:4.4px;background:#3a7b67;"></div>
<div class="a" style="left:402.69px;top:372.44px;width:5.42px;height:4.4px;background:#3d89cc;"></div>
<div class="a" style="left:408.06px;top:372.44px;width:5.42px;height:4.4px;background:#d9534f;"></div>
<div class="a" style="left:417.73px;top:369px;font-size:7.2px;line-height:12px;color:#606060;font-weight:400;transform:scaleX(0.8889);transform-origin:left center;">5</div>
<div class="a" style="left:94.69999999999999px;width:300px;text-align:right;top:379px;font-size:7.2px;line-height:12px;color:#606060;font-weight:400;transform:scaleX(0.8889);transform-origin:right center;">Test Group</div>
<div class="a" style="left:400.0px;top:382.58px;width:5.42px;height:4.4px;background:#3a7b67;"></div>
<div class="a" style="left:405.37px;top:382.58px;width:2.7399999999999998px;height:4.4px;background:#3d89cc;"></div>
<div class="a" style="left:412.36px;top:379px;font-size:7.2px;line-height:12px;color:#606060;font-weight:400;transform:scaleX(0.8889);transform-origin:left center;">3</div>
<div class="a" style="left:250.0px;width:300px;text-align:center;top:393px;font-size:7.2px;line-height:12px;color:#555;font-weight:400;transform:scaleX(0.9028);transform-origin:center center;">0</div>
<div class="a" style="left:384.29999999999995px;width:300px;text-align:center;top:393px;font-size:7.2px;line-height:12px;color:#555;font-weight:400;transform:scaleX(0.9028);transform-origin:center center;">50</div>
<div class="a" style="left:518.6px;width:300px;text-align:center;top:393px;font-size:7.2px;line-height:12px;color:#555;font-weight:400;transform:scaleX(0.9028);transform-origin:center center;">100</div>
<div class="a" style="left:652.9px;width:300px;text-align:center;top:393px;font-size:7.2px;line-height:12px;color:#555;font-weight:400;transform:scaleX(0.9028);transform-origin:center center;">150</div>
<div class="a" style="left:787.2px;width:300px;text-align:center;top:393px;font-size:7.2px;line-height:12px;color:#555;font-weight:400;transform:scaleX(0.9028);transform-origin:center center;">200</div>
<div class="a" style="left:488px;top:414.6px;width:3.8px;height:3.8px;background:#3a7b67;"></div>
<div class="a" style="left:496.2px;top:411px;font-size:7.2px;line-height:12px;color:#606060;font-weight:400;transform:scaleX(0.8889);transform-origin:left center;">Completed</div>
<div class="a" style="left:534.3px;top:414.6px;width:3.8px;height:3.8px;background:#3d89cc;"></div>
<div class="a" style="left:542.8px;top:411px;font-size:7.2px;line-height:12px;color:#606060;font-weight:400;transform:scaleX(0.8889);transform-origin:left center;">Active</div>
<div class="a" style="left:566.7px;top:414.6px;width:3.8px;height:3.8px;background:#eda444;"></div>
<div class="a" style="left:575px;top:411px;font-size:7.2px;line-height:12px;color:#606060;font-weight:400;transform:scaleX(0.8889);transform-origin:left center;">Warning</div>
<div class="a" style="left:606px;top:414.6px;width:3.8px;height:3.8px;background:#d9534f;"></div>
<div class="a" style="left:614.7px;top:411px;font-size:7.2px;line-height:12px;color:#606060;font-weight:400;transform:scaleX(0.8889);transform-origin:left center;">Overdue</div>
<div class="a" style="left:646px;top:414.6px;width:3.8px;height:3.8px;background:#18a3cf;"></div>
<div class="a" style="left:654.7px;top:411px;font-size:7.2px;line-height:12px;color:#606060;font-weight:400;transform:scaleX(0.8889);transform-origin:left center;">Not Attending</div>
<div class="a" style="left:701.3px;top:414.6px;width:3.8px;height:3.8px;background:#9d5cf3;"></div>
<div class="a" style="left:709.7px;top:411px;font-size:7.2px;line-height:12px;color:#606060;font-weight:400;transform:scaleX(0.8889);transform-origin:left center;">Did Not Attend</div>
<div class="a" style="left:758.7px;top:414.6px;width:3.8px;height:3.8px;background:#e23c8d;"></div>
<div class="a" style="left:767px;top:411px;font-size:7.2px;line-height:12px;color:#606060;font-weight:400;transform:scaleX(0.8889);transform-origin:left center;">Cancelled</div>
<div class="a" style="left:422.4px;top:240.2px;width:38.6px;height:9.4px;background:#428bca;border-radius:1.5px;"></div>
<svg class="a" style="left:425.9px;top:242.6px;" width="4.3" height="4.3" viewBox="0 0 10 10"><path d="M0 0h10L6 4.5v5.5L4 8.5V4.5z" fill="#fff"/></svg>
<div class="a" style="left:432.8px;top:239px;font-size:6.0px;line-height:12px;color:#fff;font-weight:400;transform:scaleX(0.8518);transform-origin:left center;">Groups: All</div>
<div class="a" style="left:464px;top:240.2px;width:50px;height:9.4px;background:#428bca;border-radius:1.5px;"></div>
<svg class="a" style="left:467.5px;top:242.6px;" width="4.3" height="4.3" viewBox="0 0 10 10"><path d="M0 0h10L6 4.5v5.5L4 8.5V4.5z" fill="#fff"/></svg>
<div class="a" style="left:474.4px;top:239px;font-size:6.0px;line-height:12px;color:#fff;font-weight:400;transform:scaleX(0.8353);transform-origin:left center;">Course Type: All</div>
<div class="a" style="left:517px;top:240.2px;width:40px;height:9.4px;background:#428bca;border-radius:1.5px;"></div>
<svg class="a" style="left:520.5px;top:242.6px;" width="4.3" height="4.3" viewBox="0 0 10 10"><path d="M0 0h10L6 4.5v5.5L4 8.5V4.5z" fill="#fff"/></svg>
<div class="a" style="left:527.4px;top:239px;font-size:6.0px;line-height:12px;color:#fff;font-weight:400;transform:scaleX(0.8246);transform-origin:left center;">Courses: All</div>
<div class="a" style="left:560px;top:240.2px;width:49.5px;height:9.4px;background:#428bca;border-radius:1.5px;"></div>
<svg class="a" style="left:563.5px;top:242.6px;" width="4.3" height="4.3" viewBox="0 0 10 10"><path d="M0 0h10L6 4.5v5.5L4 8.5V4.5z" fill="#fff"/></svg>
<div class="a" style="left:570.4px;top:239px;font-size:6.0px;line-height:12px;color:#fff;font-weight:400;transform:scaleX(0.8344);transform-origin:left center;">Learners: Active</div>
<div class="a" style="left:613px;top:240.2px;width:48.5px;height:9.4px;background:#428bca;border-radius:1.5px;"></div>
<svg class="a" style="left:616.5px;top:242.6px;" width="4.3" height="4.3" viewBox="0 0 10 10"><path d="M0 0h10L6 4.5v5.5L4 8.5V4.5z" fill="#fff"/></svg>
<div class="a" style="left:623.4px;top:239px;font-size:6.0px;line-height:12px;color:#fff;font-weight:400;transform:scaleX(0.8440);transform-origin:left center;">Supervisors: All</div>
<div class="a" style="left:664.5px;top:240.2px;width:53.5px;height:9.4px;background:#428bca;border-radius:1.5px;"></div>
<svg class="a" style="left:668.0px;top:242.6px;" width="4.3" height="4.3" viewBox="0 0 10 10"><path d="M0 0h10L6 4.5v5.5L4 8.5V4.5z" fill="#fff"/></svg>
<div class="a" style="left:674.9px;top:239px;font-size:6.0px;line-height:12px;color:#fff;font-weight:400;transform:scaleX(0.8545);transform-origin:left center;">Organizations: All</div>
<div class="a" style="left:721px;top:240.2px;width:36.4px;height:9.4px;background:#428bca;border-radius:1.5px;"></div>
<svg class="a" style="left:724.5px;top:242.6px;" width="4.3" height="4.3" viewBox="0 0 10 10"><path d="M0 0h10L6 4.5v5.5L4 8.5V4.5z" fill="#fff"/></svg>
<div class="a" style="left:731.4px;top:239px;font-size:6.0px;line-height:12px;color:#fff;font-weight:400;transform:scaleX(0.8337);transform-origin:left center;">Teams: All</div>
<div class="a" style="left:760.5px;top:240.2px;width:57.5px;height:9.4px;background:#428bca;border-radius:1.5px;"></div>
<svg class="a" style="left:764.0px;top:242.6px;" width="4.3" height="4.3" viewBox="0 0 10 10"><path d="M0 0h10L6 4.5v5.5L4 8.5V4.5z" fill="#fff"/></svg>
<div class="a" style="left:770.9px;top:239px;font-size:6.0px;line-height:12px;color:#fff;font-weight:400;transform:scaleX(0.8384);transform-origin:left center;">Progress Status: All</div>
<div class="a" style="left:821px;top:240.2px;width:39.8px;height:9.4px;background:#428bca;border-radius:1.5px;"></div>
<svg class="a" style="left:824.5px;top:242.6px;" width="4.3" height="4.3" viewBox="0 0 10 10"><path d="M0 0h10L6 4.5v5.5L4 8.5V4.5z" fill="#fff"/></svg>
<div class="a" style="left:831.4px;top:239px;font-size:6.0px;line-height:12px;color:#fff;font-weight:400;transform:scaleX(0.8826);transform-origin:left center;">Method: All</div>
</body></html>
